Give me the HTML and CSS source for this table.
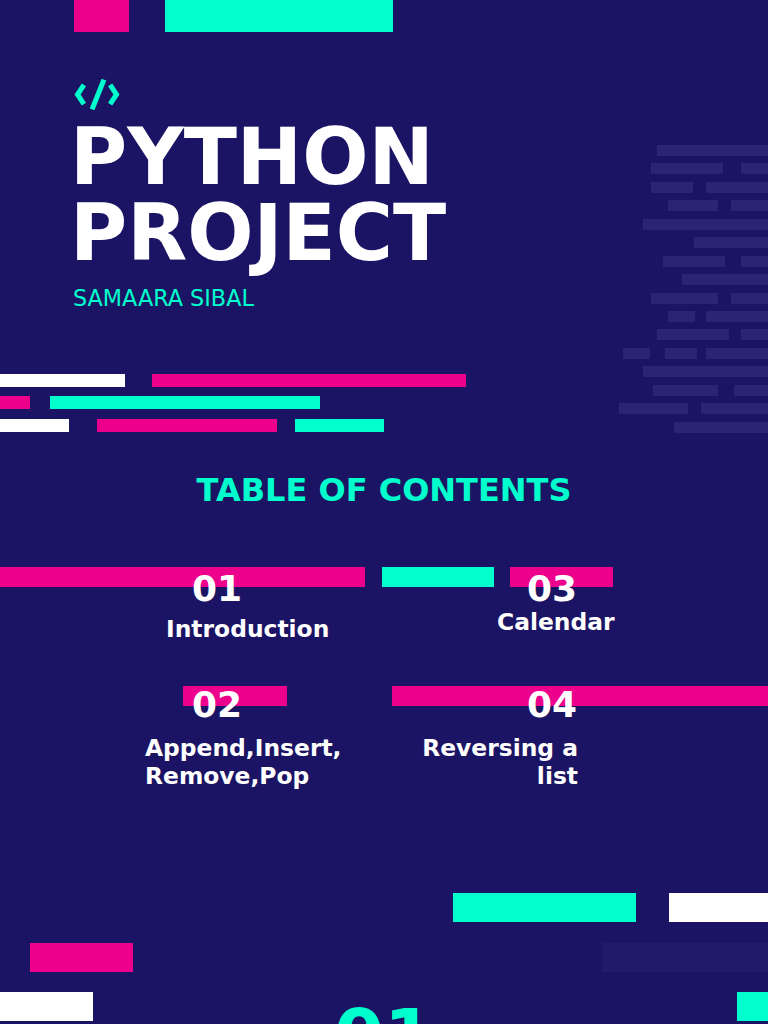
FILE: index.html
```html
<!DOCTYPE html>
<html lang="en">
<head>
<meta charset="utf-8">
<title>Python Project</title>
<link rel="stylesheet" href="styles.css">
</head>
<body>
<div class="page">
  <div class="topbars">
    <span class="bar pink tb1"></span>
    <span class="bar teal tb2"></span>
  </div>

  <section class="hero">
    <div class="hero-main">
      <svg class="code-icon" viewBox="0 0 46 31" width="46" height="31" aria-hidden="true">
        <polyline points="8.5,8 3.5,15.5 8.5,23" fill="none" stroke="#00ffcc" stroke-width="5" stroke-linejoin="miter" stroke-linecap="square"/>
        <line x1="29" y1="3" x2="19" y2="28" stroke="#00ffcc" stroke-width="5" stroke-linecap="square"/>
        <polyline points="37.5,8 42.5,15.5 37.5,23" fill="none" stroke="#00ffcc" stroke-width="5" stroke-linejoin="miter" stroke-linecap="square"/>
      </svg>
      <h1 class="title">PYTHON<br>PROJECT</h1>
      <p class="author">SAMAARA SIBAL</p>
      <div class="colorbars">
        <div class="cb-row cb1"><span class="bar white"></span><span class="bar pink"></span></div>
        <div class="cb-row cb2"><span class="bar pink"></span><span class="bar teal"></span></div>
        <div class="cb-row cb3"><span class="bar white"></span><span class="bar pink"></span><span class="bar teal"></span></div>
      </div>
    </div>
    <div class="code-lines" aria-hidden="true">
      <div class="ln l1"><span></span></div>
      <div class="ln l2"><span></span><span></span></div>
      <div class="ln l3"><span></span><span></span></div>
      <div class="ln l4"><span></span><span></span></div>
      <div class="ln l5"><span></span></div>
      <div class="ln l6"><span></span></div>
      <div class="ln l7"><span></span><span></span></div>
      <div class="ln l8"><span></span></div>
      <div class="ln l9"><span></span><span></span></div>
      <div class="ln l10"><span></span><span></span></div>
      <div class="ln l11"><span></span><span></span></div>
      <div class="ln l12"><span></span><span></span><span></span></div>
      <div class="ln l13"><span></span></div>
      <div class="ln l14"><span></span><span></span></div>
      <div class="ln l15"><span></span><span></span></div>
      <div class="ln l16"><span></span></div>
    </div>
  </section>

  <h2 class="toc-heading">TABLE OF CONTENTS</h2>

  <div class="toc-row row1">
    <div class="strip strip1">
      <span class="bar pink"></span><span class="bar teal"></span><span class="bar pink"></span>
    </div>
    <div class="items">
      <div class="item">
        <div class="num n-left n-r1">01</div>
        <div class="label intro">Introduction</div>
      </div>
      <div class="item">
        <div class="num n-right n-r1">03</div>
        <div class="label calendar">Calendar</div>
      </div>
    </div>
  </div>

  <div class="toc-row row2">
    <div class="strip strip2">
      <span class="bar pink"></span><span class="bar pink"></span>
    </div>
    <div class="items">
      <div class="item">
        <div class="num n-left n-r2">02</div>
        <div class="label append">Append,Insert,<br>Remove,Pop</div>
      </div>
      <div class="item">
        <div class="num n-right n-r2">04</div>
        <div class="label reverse">Reversing a<br>list</div>
      </div>
    </div>
  </div>

  <div class="bottom">
    <div class="bt-row bt1"><span class="bar teal"></span><span class="bar white"></span></div>
    <div class="bt-row bt2"><span class="bar pink"></span><span class="bar faint"></span></div>
    <div class="bt-row bt3">
      <span class="bar white"></span>
      <div class="big-num">01</div>
      <span class="bar teal"></span>
    </div>
  </div>
</div>
</body>
</html>
```

FILE: styles.css
```css
* { box-sizing: border-box; }

html, body {
  margin: 0;
  padding: 0;
  background: #1b1464;
}

body {
  font-family: "DejaVu Sans", "Liberation Sans", sans-serif;
  color: #ffffff;
}

.page {
  width: 768px;
  height: 1024px;
  overflow: hidden;
  background: #1b1464;
}

.bar { display: block; }
.pink { background: #ec008c; }
.teal { background: #00ffcc; }
.white { background: #ffffff; }
.faint { background: #211a6a; }

/* top bars */
.topbars {
  display: flex;
  gap: 36px;
  padding-left: 74px;
  height: 32px;
}
.tb1 { width: 55px; }
.tb2 { width: 228px; }

/* hero */
.hero {
  display: grid;
  grid-template-columns: 618px 150px;
}

.hero-main {
  display: flex;
  flex-direction: column;
  align-items: flex-start;
}

.code-icon {
  display: block;
  margin: 47px 0 0 74px;
}

.title {
  margin: 9px 0 0 70px;
  font-size: 78px;
  line-height: 76px;
  font-weight: bold;
  color: #ffffff;
}

.author {
  margin: 15px 0 0 73px;
  font-size: 22.3px;
  line-height: 25.6px;
  font-weight: normal;
  color: #00ffcc;
}

.colorbars {
  margin-top: 62px;
  display: flex;
  flex-direction: column;
  gap: 9.5px;
  width: 100%;
}
.cb-row {
  display: flex;
  height: 13px;
}
.cb1 { gap: 27px; }
.cb1 .white { width: 125px; }
.cb1 .pink { width: 314px; }
.cb2 { gap: 20px; }
.cb2 .pink { width: 30px; }
.cb2 .teal { width: 270px; }
.cb3 { gap: 0; }
.cb3 .white { width: 69px; margin-right: 28px; }
.cb3 .pink { width: 180px; margin-right: 18px; }
.cb3 .teal { width: 89px; }

/* faint code lines */
.code-lines {
  padding-top: 113px;
  display: flex;
  flex-direction: column;
  gap: 7.45px;
}
.ln {
  display: grid;
  height: 11px;
  justify-content: end;
}
.ln span { background: #2a2572; }
.l1 { grid-template-columns: 111px; }
.l2 { grid-template-columns: 72px 27px; column-gap: 18px; }
.l3 { grid-template-columns: 42px 62px; column-gap: 13px; }
.l4 { grid-template-columns: 50px 37px; column-gap: 13px; }
.l5 { grid-template-columns: 125px; }
.l6 { grid-template-columns: 74px; }
.l7 { grid-template-columns: 62px 27px; column-gap: 16px; }
.l8 { grid-template-columns: 86px; }
.l9 { grid-template-columns: 67px 37px; column-gap: 13px; }
.l10 { grid-template-columns: 27px 62px; column-gap: 11px; }
.l11 { grid-template-columns: 72px 27px; column-gap: 12px; }
.l12 { grid-template-columns: 27px 26px 62px; column-gap: 15px; }
.l12 span:nth-child(2) { margin-right: -6px; }
.l13 { grid-template-columns: 125px; }
.l14 { grid-template-columns: 65px 34px; column-gap: 16px; }
.l15 { grid-template-columns: 69px 67px; column-gap: 13px; }
.l16 { grid-template-columns: 94px; }

/* table of contents */
.toc-heading {
  margin: 38px 0 0 0;
  text-align: center;
  font-size: 32px;
  line-height: 38px;
  font-weight: bold;
  color: #00ffcc;
}

.toc-row {
  display: grid;
}
.toc-row > * {
  grid-area: 1 / 1;
}
.row1 { margin-top: 58px; }
.row2 { margin-top: 43px; }

.strip {
  display: flex;
  height: 20px;
}
.strip1 .pink:first-child { width: 365px; margin-right: 17px; }
.strip1 .teal { width: 112px; margin-right: 16px; }
.strip1 .pink:last-child { width: 103px; }
.strip2 { padding-left: 183px; }
.strip2 .pink:first-child { width: 104px; margin-right: 105px; }
.strip2 .pink:last-child { width: 376px; }

.items {
  display: grid;
  grid-template-columns: 423px 1fr;
  align-items: start;
}
.item {
  display: flex;
  flex-direction: column;
  align-items: flex-start;
}

.num {
  font-size: 36px;
  line-height: 36px;
  font-weight: bold;
  color: #ffffff;
}
.n-left { margin-left: 192px; }
.n-right { margin-left: 104px; }
.n-r1 { margin-top: 4px; }
.n-r2 { margin-top: 1.5px; }

.label {
  font-size: 23.4px;
  line-height: 28px;
  font-weight: bold;
  color: #ffffff;
  white-space: nowrap;
}
.intro { margin: 8px 0 0 166px; }
.calendar { margin: 1px 0 0 74px; }
.append { margin: 11px 0 0 145px; }
.reverse { margin: 11px 0 0 -10px; width: 165px; text-align: right; }

/* bottom decoration */
.bottom {
  margin-top: 102.5px;
}
.bt-row {
  display: flex;
  height: 29px;
}
.bt1 { justify-content: flex-end; gap: 33px; }
.bt1 .teal { width: 183px; }
.bt1 .white { width: 99px; }
.bt2 { margin-top: 21px; justify-content: space-between; }
.bt2 .pink { width: 103px; margin-left: 30px; }
.bt2 .faint { width: 166px; }
.bt3 {
  margin-top: 20px;
  display: grid;
  grid-template-columns: 1fr auto 1fr;
  align-items: start;
  height: auto;
}
.bt3 .white { width: 93px; height: 29px; justify-self: start; }
.bt3 .teal { width: 31px; height: 29px; justify-self: end; }
.big-num {
  padding-top: 7.5px;
  font-size: 72px;
  line-height: 72px;
  font-weight: bold;
  color: #00ffcc;
}
```
